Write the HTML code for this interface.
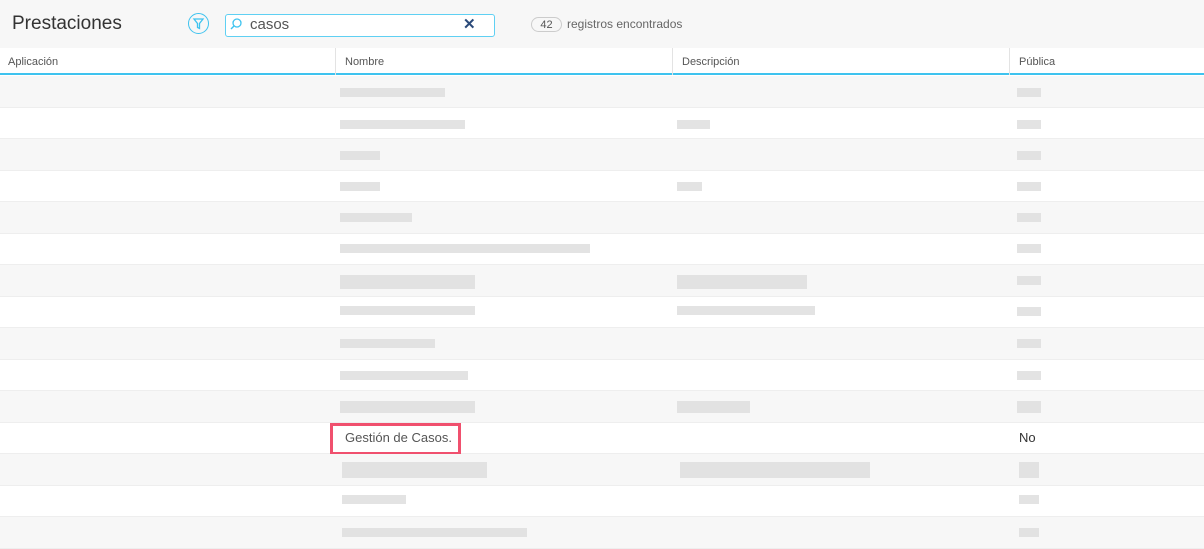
<!DOCTYPE html><html><head><meta charset="utf-8"><style>
body{margin:0;width:1204px;height:540px;overflow:hidden;background:#fff;font-family:"Liberation Sans",sans-serif;position:relative}
.a{position:absolute}
.top{left:0;top:0;width:1204px;height:48px;background:#f7f7f7}
.hdr{left:0;top:48px;width:1204px;height:27px;background:#fff;border-bottom:2px solid #3ec3ef;box-sizing:border-box;font-size:11px;color:#555}
.hdr span{position:absolute;top:8px}
.vl{position:absolute;top:0;width:1px;height:27px;background:#e3e3e3}
.row{position:absolute;left:0;width:1204px;height:32px;border-bottom:1px solid #eee;box-sizing:border-box}
.g{background:#f7f7f7}
.b{position:absolute;height:9px;background:#dcdcdc;opacity:.8}
</style></head><body>
<div class="a top"></div>
<div class="a" style="left:12px;top:13px;font-size:19px;color:#333">Prestaciones</div>
<div class="a" style="left:188px;top:13px;width:21px;height:21px;border:1px solid #3ec3ef;border-radius:50%;box-sizing:border-box"><svg width="19" height="19" viewBox="0 0 19 19"><path d="M5 5h9l-3.5 4.5v5l-2 -1v-4z" fill="none" stroke="#3ec3ef" stroke-width="1.3"/></svg></div>
<div class="a" style="left:225px;top:14px;width:270px;height:23px;border:1px solid #5fd0f3;border-radius:3px;background:#fff;box-sizing:border-box"></div>
<svg class="a" style="left:229px;top:17px" width="14" height="14"><circle cx="8" cy="6" r="4" fill="none" stroke="#3ec3ef" stroke-width="1.3"/><path d="M5 9L2 12" stroke="#3ec3ef" stroke-width="1.4"/></svg>
<div class="a" style="left:250px;top:16px;font-size:15px;color:#555">casos</div>
<div class="a" style="left:463px;top:15px;font-size:15px;color:#2b4a7a;font-weight:bold">✕</div>
<div class="a" style="left:531px;top:17px;width:31px;height:15px;border:1px solid #ccc;border-radius:8px;font-size:11px;color:#555;text-align:center;line-height:15px;box-sizing:border-box">42</div>
<div class="a" style="left:567px;top:17px;font-size:12px;color:#666">registros encontrados</div>
<div class="a hdr"><span style="left:8px">Aplicación</span><div class="vl" style="left:335px"></div><span style="left:345px">Nombre</span><div class="vl" style="left:672px"></div><span style="left:682px">Descripción</span><div class="vl" style="left:1009px"></div><span style="left:1019px">Pública</span></div>
<div class="row g" style="top:76px"><div class="b" style="left:340px;top:12px;width:105px"></div><div class="b" style="left:1017px;top:12px;width:24px"></div></div>
<div class="row" style="top:107px"><div class="b" style="left:340px;top:13px;width:125px"></div><div class="b" style="left:677px;top:13px;width:33px"></div><div class="b" style="left:1017px;top:13px;width:24px"></div></div>
<div class="row g" style="top:139px"><div class="b" style="left:340px;top:12px;width:40px"></div><div class="b" style="left:1017px;top:12px;width:24px"></div></div>
<div class="row" style="top:170px"><div class="b" style="left:340px;top:12px;width:40px"></div><div class="b" style="left:677px;top:12px;width:25px"></div><div class="b" style="left:1017px;top:12px;width:24px"></div></div>
<div class="row g" style="top:202px"><div class="b" style="left:340px;top:11px;width:72px"></div><div class="b" style="left:1017px;top:11px;width:24px"></div></div>
<div class="row" style="top:233px"><div class="b" style="left:340px;top:11px;width:250px"></div><div class="b" style="left:1017px;top:11px;width:24px"></div></div>
<div class="row g" style="top:265px"><div class="b" style="left:340px;top:10px;width:135px;height:14px"></div><div class="b" style="left:677px;top:10px;width:130px;height:14px"></div><div class="b" style="left:1017px;top:11px;width:24px"></div></div>
<div class="row" style="top:296px"><div class="b" style="left:340px;top:10px;width:135px"></div><div class="b" style="left:677px;top:10px;width:138px"></div><div class="b" style="left:1017px;top:11px;width:24px"></div></div>
<div class="row g" style="top:328px"><div class="b" style="left:340px;top:11px;width:95px"></div><div class="b" style="left:1017px;top:11px;width:24px"></div></div>
<div class="row" style="top:359px"><div class="b" style="left:340px;top:12px;width:128px"></div><div class="b" style="left:1017px;top:12px;width:24px"></div></div>
<div class="row g" style="top:391px"><div class="b" style="left:340px;top:10px;width:135px;height:12px"></div><div class="b" style="left:677px;top:10px;width:73px;height:12px"></div><div class="b" style="left:1017px;top:10px;width:24px;height:12px"></div></div>
<div class="row" style="top:422px"><div class="a" style="left:345px;top:8px;font-size:13px;color:#555">Gestión de Casos.</div><div class="a" style="left:1019px;top:8px;font-size:13px;color:#333">No</div></div>
<div class="a" style="left:330px;top:423px;width:131px;height:32px;border:3px solid #f0506e;box-sizing:border-box"></div>
<div class="row g" style="top:454px"><div class="b" style="left:342px;top:8px;width:145px;height:16px"></div><div class="b" style="left:680px;top:8px;width:190px;height:16px"></div><div class="b" style="left:1019px;top:8px;width:20px;height:16px"></div></div>
<div class="row" style="top:485px"><div class="b" style="left:342px;top:10px;width:64px"></div><div class="b" style="left:1019px;top:10px;width:20px"></div></div>
<div class="row g" style="top:517px"><div class="b" style="left:342px;top:11px;width:185px"></div><div class="b" style="left:1019px;top:11px;width:20px"></div></div>
</body></html>
